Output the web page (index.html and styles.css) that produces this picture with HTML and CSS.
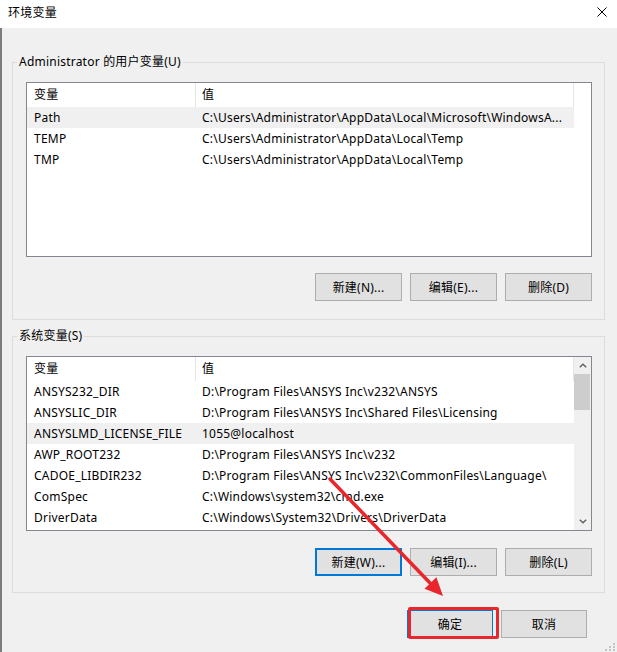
FILE: index.html
```html
<!DOCTYPE html>
<html lang="zh-CN">
<head>
    <meta charset="UTF-8">
    <title>环境变量</title>
    <link rel="stylesheet" href="styles.css">
</head>
<body>
<div class="window">

    <div class="titlebar">
        <span class="title">环境变量</span>
        <svg class="close" width="10" height="10" viewBox="0 0 10 10">
            <path d="M0.5 0.5 L9.5 9.5 M9.5 0.5 L0.5 9.5" stroke="#000" stroke-width="1" fill="none"/>
        </svg>
    </div>

    <div class="dialog">

        <fieldset class="group">
            <legend>Administrator 的用户变量(U)</legend>
            <div class="listview">
                <div class="lv-cols">
                    <div class="lv-head"><span>变量</span><span>值</span></div>
                    <div class="lv-row selected"><span>Path</span><span>C:\Users\Administrator\AppData\Local\Microsoft\WindowsA...</span></div>
                    <div class="lv-row"><span>TEMP</span><span>C:\Users\Administrator\AppData\Local\Temp</span></div>
                    <div class="lv-row"><span>TMP</span><span>C:\Users\Administrator\AppData\Local\Temp</span></div>
                </div>
            </div>
            <div class="btn-row">
                <button class="btn">新建(N)...</button>
                <button class="btn">编辑(E)...</button>
                <button class="btn">删除(D)</button>
            </div>
        </fieldset>

        <fieldset class="group group-system">
            <legend>系统变量(S)</legend>
            <div class="listview">
                <div class="lv-cols">
                    <div class="lv-head"><span>变量</span><span>值</span></div>
                    <div class="lv-row"><span>ANSYS232_DIR</span><span>D:\Program Files\ANSYS Inc\v232\ANSYS</span></div>
                    <div class="lv-row"><span>ANSYSLIC_DIR</span><span>D:\Program Files\ANSYS Inc\Shared Files\Licensing</span></div>
                    <div class="lv-row selected"><span>ANSYSLMD_LICENSE_FILE</span><span>1055@localhost</span></div>
                    <div class="lv-row"><span>AWP_ROOT232</span><span>D:\Program Files\ANSYS Inc\v232</span></div>
                    <div class="lv-row"><span>CADOE_LIBDIR232</span><span>D:\Program Files\ANSYS Inc\v232\CommonFiles\Language\</span></div>
                    <div class="lv-row"><span>ComSpec</span><span>C:\Windows\system32\cmd.exe</span></div>
                    <div class="lv-row"><span>DriverData</span><span>C:\Windows\System32\Drivers\DriverData</span></div>
                </div>
                <div class="scrollbar">
                    <div class="sb-arrow">
                        <svg width="8" height="5" viewBox="0 0 8 5"><path d="M0.8 4.3 L4 1.2 L7.2 4.3" stroke="#606060" stroke-width="1.4" fill="none"/></svg>
                    </div>
                    <div class="sb-thumb"></div>
                    <div class="sb-track"></div>
                    <div class="sb-arrow">
                        <svg width="8" height="5" viewBox="0 0 8 5"><path d="M0.8 0.7 L4 3.8 L7.2 0.7" stroke="#606060" stroke-width="1.4" fill="none"/></svg>
                    </div>
                </div>
            </div>
            <div class="btn-row">
                <button class="btn focused">新建(W)...</button>
                <button class="btn">编辑(I)...</button>
                <button class="btn">删除(L)</button>
            </div>
        </fieldset>

        <div class="dialog-buttons">
            <button class="btn btn-wide default">确定</button>
            <button class="btn btn-wide">取消</button>
        </div>
    </div>

    <!-- size grip -->
    <svg class="grip" width="10" height="8" viewBox="0 0 10 8">
        <rect x="8" y="0" width="2" height="2" fill="#c4c4c4"/>
        <rect x="4" y="3" width="2" height="2" fill="#c4c4c4"/>
        <rect x="8" y="3" width="2" height="2" fill="#c4c4c4"/>
        <rect x="0" y="6" width="2" height="2" fill="#c4c4c4"/>
        <rect x="4" y="6" width="2" height="2" fill="#c4c4c4"/>
        <rect x="8" y="6" width="2" height="2" fill="#c4c4c4"/>
    </svg>

    <!-- red markup pointing at the OK button -->
    <svg class="markup" width="617" height="652" viewBox="0 0 617 652">
        <line x1="330" y1="479" x2="431" y2="584" stroke="#e8262b" stroke-width="3.5" stroke-linecap="round"/>
        <polygon points="443,596 424.5,588.8 436.4,577.2" fill="#e8262b"/>
    </svg>
    <div class="markup-box"></div>

</div>
</body>
</html>
```

FILE: styles.css
```css
:root {
    --face: #f0f0f0;
    --group-line: #dcdcdc;
    --list-border: #828790;
    --btn-bg: #e1e1e1;
    --btn-border: #adadad;
    --focus: #0078d7;
    --mark: #e8262b;
}

body {
    margin: 0;
    background: #fff;
    font-family: "Noto Sans", "Noto Sans CJK SC", sans-serif;
    font-size: 12px;
    letter-spacing: 0.22px;
    color: #000;
}

.window {
    position: relative;
    width: 617px;
    height: 652px;
    overflow: hidden;
}

.titlebar {
    height: 28px;
    box-sizing: border-box;
    padding: 0 10px 0 8px;
    display: flex;
    align-items: center;
    justify-content: space-between;
    background: #fff;
}

.title {
    line-height: 16px;
    padding-bottom: 2px;
}

.close {
    display: block;
    margin-top: -4px;
}

.dialog {
    height: 624px;
    box-sizing: border-box;
    padding: 26px 0 0 10px;
    background: var(--face);
    border-left: 2px solid #7c7c7c;
}

.group {
    width: 593px;
    box-sizing: border-box;
    margin: 0;
    padding: 12px 12px 18px 13px;
    border: 1px solid var(--group-line);
}

.group legend {
    margin-left: -9px;
    padding: 0 2px;
    line-height: 16px;
}

.group-system {
    margin-top: 8px;
    padding-bottom: 16px;
}

.listview {
    height: 175px;
    box-sizing: border-box;
    border: 1px solid var(--list-border);
    background: #fff;
    display: flex;
    overflow: hidden;
}

.lv-cols {
    width: 547px;
}

.lv-head,
.lv-row {
    display: grid;
    grid-template-columns: 168px 1fr;
    white-space: nowrap;
}

.lv-head {
    height: 24px;
    line-height: 24px;
}

.lv-head span {
    padding-left: 7px;
}

.lv-head span + span {
    padding-left: 6px;
    border-left: 1px solid #e5e5e5;
    border-right: 1px solid #e5e5e5;
}

.lv-row {
    height: 21px;
    line-height: 21px;
}

.lv-row span {
    padding-left: 7px;
    overflow: hidden;
}

.lv-row.selected {
    background: #f0f0f0;
}

.scrollbar {
    width: 17px;
    margin-left: auto;
    background: var(--face);
    display: flex;
    flex-direction: column;
}

.sb-arrow {
    height: 17px;
    display: flex;
    align-items: center;
    justify-content: center;
}

.sb-arrow svg {
    display: block;
}

.sb-thumb {
    height: 36px;
    margin: 0 1px 0 0;
    background: #cdcdcd;
}

.sb-track {
    flex: 1;
}

.btn-row,
.dialog-buttons {
    display: flex;
    justify-content: flex-end;
    gap: 8px;
}

.btn-row {
    margin-top: 16px;
}

.group-system .btn-row {
    margin-top: 17px;
}

.dialog-buttons {
    margin: 17px 30px 0 0;
}

.btn {
    width: 87px;
    height: 28px;
    box-sizing: border-box;
    padding: 0;
    font: inherit;
    letter-spacing: inherit;
    color: #000;
    background: var(--btn-bg);
    border: 1px solid var(--btn-border);
}

.btn-wide {
    width: 86px;
}

.btn.focused {
    border: 2px solid var(--focus);
}

.btn.default {
    border-color: var(--focus);
}

.grip {
    position: absolute;
    right: 2px;
    bottom: 1px;
}

.markup {
    position: absolute;
    left: 0;
    top: 0;
    pointer-events: none;
}

.markup-box {
    position: absolute;
    left: 408px;
    top: 607px;
    width: 91px;
    height: 32px;
    box-sizing: border-box;
    border: 3px solid var(--mark);
    border-radius: 2px;
    pointer-events: none;
}
```
